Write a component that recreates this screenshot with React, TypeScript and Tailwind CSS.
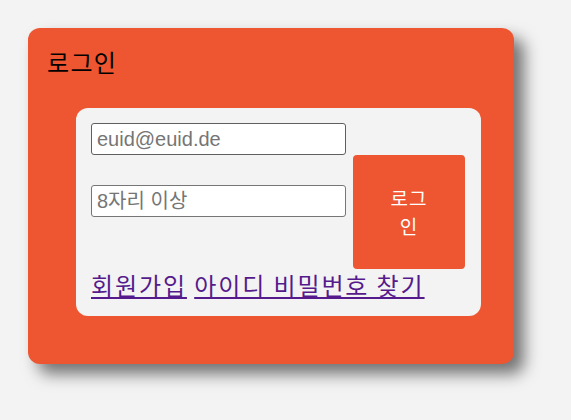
import React from "react";

export default function App() {
  const font = { fontFamily: '"Noto Sans CJK KR", "Noto Sans", sans-serif' };
  return (
    <div className="w-[571px] h-[420px] bg-[#f3f3f3] pt-[28px] pl-[28px]" style={font}>
      <div className="w-[486px] h-[336px] bg-[#ee5631] rounded-[12px] shadow-[10px_10px_16px_#727272] flex flex-col">
        <h2 className="ml-[19px] mt-[16px] text-[24px] leading-[36px] tracking-[1.3px] text-black font-normal">로그인</h2>
        <div className="ml-[48px] mt-[28px] w-[405px] h-[208px] bg-[#f3f3f3] rounded-[12px] p-[15px] flex flex-col">
          <div className="flex items-start">
            <div className="w-[255px] flex flex-col">
              <input
                type="text"
                placeholder="euid@euid.de"
                className="h-[32px] w-[255px] bg-white border border-[#5f5f5f] rounded-[3px] px-[5px] text-[20px] placeholder:text-[#757575] outline-none"
                style={{ fontFamily: '"Liberation Sans", "Noto Sans CJK KR", sans-serif' }}
              />
              <input
                type="password"
                placeholder="8자리 이상"
                className="mt-[30px] h-[32px] w-[255px] bg-white border border-[#767676] rounded-[3px] px-[5px] text-[20px] placeholder:text-[#757575] outline-none"
                style={{ fontFamily: '"Liberation Sans", "Noto Sans CJK KR", sans-serif' }}
              />
            </div>
            <button className="ml-[7px] mt-[32px] w-[112px] h-[114px] bg-[#ee5631] rounded-[4px] text-white text-[19px] leading-[28px] tracking-[1px] px-[34px] break-all">
              로그인
            </button>
          </div>
          <div className="text-[24px] leading-[32px] tracking-[1.9px] text-[#551a8b] whitespace-nowrap">
            <a href="#" className="underline">회원가입</a>{" "}
            <a href="#" className="underline">아이디 비밀번호 찾기</a>
          </div>
        </div>
      </div>
    </div>
  );
}
